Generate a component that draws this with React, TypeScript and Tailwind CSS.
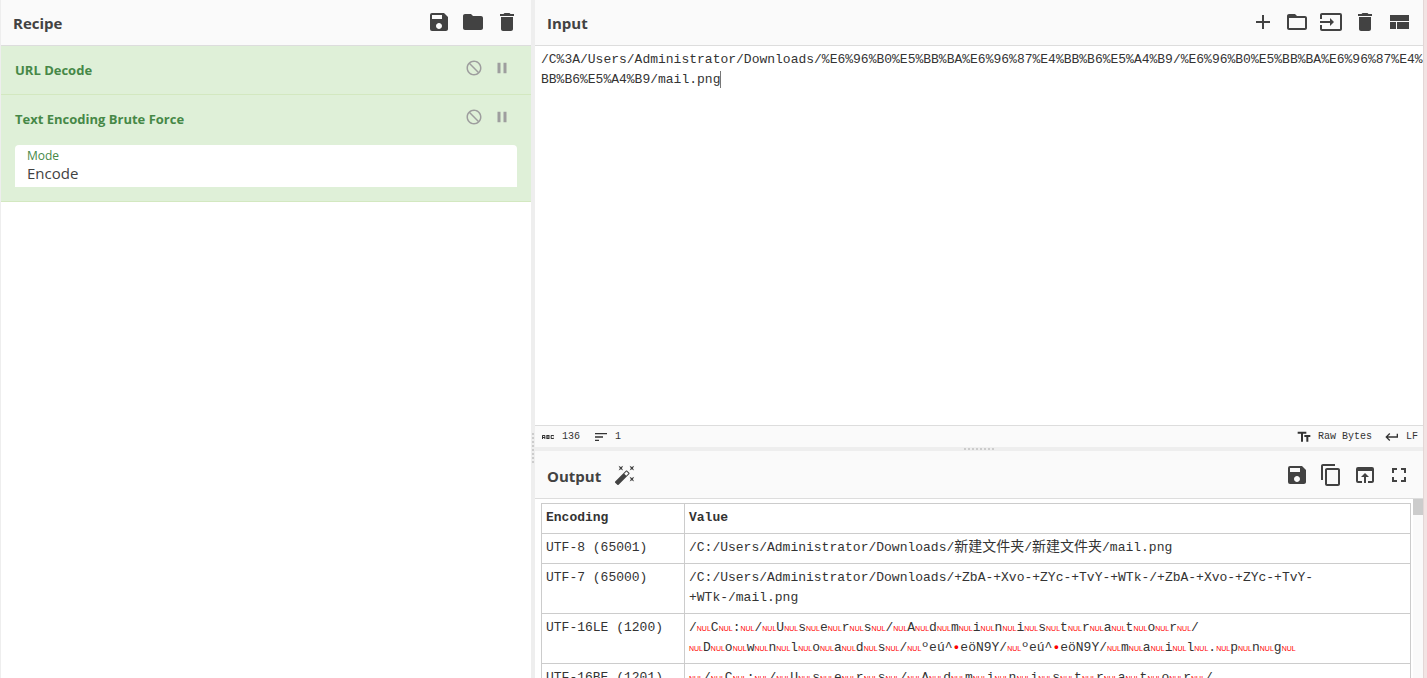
import { MdSave, MdFolder, MdDelete, MdAdd, MdInput, MdContentCopy, MdOpenInBrowser, MdFullscreen, MdNotInterested, MdPause, MdSort, MdTextFields, MdKeyboardReturn, MdAbc, MdFolderOpen } from "react-icons/md";
import type { ReactNode } from "react";

const INPUT =
  "/C%3A/Users/Administrator/Downloads/%E6%96%B0%E5%BB%BA%E6%96%87%E4%BB%B6%E5%A4%B9/%E6%96%B0%E5%BB%BA%E6%96%87%E4%BB%B6%E5%A4%B9/mail.png";

// "~" stands for a NUL byte, drawn as a small red marker.
const ROWS: [string, string[]][] = [
  ["UTF-8 (65001)", ["/C:/Users/Administrator/Downloads/新建文件夹/新建文件夹/mail.png"]],
  ["UTF-7 (65000)", ["/C:/Users/Administrator/Downloads/+ZbA-+Xvo-+ZYc-+TvY-+WTk-/+ZbA-+Xvo-+ZYc-+TvY-", "+WTk-/mail.png"]],
  ["UTF-16LE (1200)", ["/~C~:~/~U~s~e~r~s~/~A~d~m~i~n~i~s~t~r~a~t~o~r~/", "~D~o~w~n~l~o~a~d~s~/~ºeú^•eöN9Y/~ºeú^•eöN9Y/~m~a~i~l~.~p~n~g~"]],
  ["UTF-16BE (1201)", ["~/~C~:~/~U~s~e~r~s~/~A~d~m~i~n~i~s~t~r~a~t~o~r~/", "~D~o~w~n~l~o~a~d~s~/e°^úNöY9/e°^úNöY9~/~m~a~i~l~.~p~n~g"]],
];

function Line({ text }: { text: string }) {
  return (
    <div>
      {text.split(/([~•]|[\u4e00-\u9fff]+)/).map((part, i) => {
        if (part === "~") {
          return <span key={i} className="font-['Liberation_Sans',sans-serif] text-[7px] leading-none font-normal text-[#ff0000]">NUL</span>;
        }
        if (part === "•") return <span key={i} className="font-bold text-[#ff0000]">•</span>;
        if (/[\u4e00-\u9fff]/.test(part)) return <span key={i} className="text-[14px] leading-none">{part}</span>;
        return part;
      })}
    </div>
  );
}

function IconButton({ label, children }: { label: string; children: ReactNode }) {
  return (
    <button type="button" aria-label={label} className="flex size-6 items-center justify-center text-[#424242]">
      {children}
    </button>
  );
}

function Operation({ name, children }: { name: string; children?: ReactNode }) {
  return (
    <li className="border-b border-[#d3e8c0] bg-[#dff0d8] px-[14px] pb-[14px]">
      <div className="flex h-[34px] items-end justify-between">
        <h3 className="text-[13px] leading-5 font-bold text-[#468847]">{name}</h3>
        <div className="flex gap-[10px] pr-[6px] pb-[3px] text-[#9e9e9e]">
          <button type="button" aria-label={`Disable ${name}`}><MdNotInterested size={18} /></button>
          <button type="button" aria-label={`Pause at ${name}`}><MdPause size={18} /></button>
        </div>
      </div>
      {children}
    </li>
  );
}

export default function App() {
  return (
    <div className="flex h-screen overflow-hidden bg-white font-['Open_Sans',sans-serif] text-[#424242]">
      <section className="flex w-[531px] shrink-0 flex-col border-l border-[#eeeeee]">
        <header className="flex h-[46px] items-center justify-between border-b border-[#dddddd] bg-[#fafafa] px-3">
          <h2 className="pt-px text-[15px] font-bold">Recipe</h2>
          <div className="flex gap-[10px] pb-[2px]">
            <IconButton label="Save recipe"><MdSave size={24} /></IconButton>
            <IconButton label="Load recipe"><MdFolder size={24} /></IconButton>
            <IconButton label="Clear recipe"><MdDelete size={24} /></IconButton>
          </div>
        </header>
        <ul>
          <Operation name="URL Decode" />
          <Operation name="Text Encoding Brute Force">
            <div className="mt-4 flex h-[42px] flex-col rounded-t bg-white">
              <label htmlFor="mode" className="px-3 pt-[3px] text-[12px] leading-4 text-[#468847]">Mode</label>
              <select id="mode" defaultValue="Encode" className="w-full appearance-none px-3 text-[15px] leading-[18px]">
                <option>Encode</option>
                <option>Decode</option>
              </select>
            </div>
          </Operation>
        </ul>
      </section>

      <div className="flex w-1 shrink-0 items-center justify-center bg-[#eeeeee]">
        <div className="mt-[218px] h-[31px] w-[2px] bg-[repeating-linear-gradient(#cccccc_0_2px,transparent_2px_4px)]" />
      </div>

      <main className="flex min-w-0 flex-1 flex-col">
        <section className="flex h-[447px] shrink-0 flex-col">
          <header className="flex h-[46px] shrink-0 items-center justify-between border-b border-[#dddddd] bg-[#fafafa] px-3">
            <h2 className="pt-px text-[15px] font-bold">Input</h2>
            <div className="flex gap-[10px] pb-[2px]">
              <IconButton label="Add input"><MdAdd size={24} /></IconButton>
              <IconButton label="Open folder"><MdFolderOpen size={24} /></IconButton>
              <IconButton label="Open file"><MdInput size={24} /></IconButton>
              <IconButton label="Clear input"><MdDelete size={24} /></IconButton>
              <IconButton label="Reset layout">
                <svg viewBox="0 0 24 24" className="size-6" fill="currentColor">
                  <path d="M3 19h6v-7H3v7zm7 0h12v-7H10v7zM3 5v6h19V5H3z" />
                </svg>
              </IconButton>
            </div>
          </header>
          <div className="relative min-h-0 flex-1 font-['Liberation_Mono',monospace] text-[13px] leading-5">
            <textarea
              aria-label="Input"
              spellCheck={false}
              defaultValue={INPUT}
              className="block size-full resize-none overflow-hidden pt-1 pl-[6px] break-all text-[#333333] caret-transparent outline-none"
            />
            <span className="absolute top-[25px] left-[calc(6px+23ch)] h-[17px] w-px bg-[#777777]" />
          </div>
          <footer className="flex h-[22px] shrink-0 items-center justify-between border-t border-[#dddddd] bg-[#fafafa] pr-[5px] pl-[5px] font-['Liberation_Mono',monospace] text-[10px] text-[#333333]">
            <div className="flex items-center gap-[6px]">
              <MdAbc size={16} /><span className="pr-[7px]">136</span>
              <MdSort size={16} /><span>1</span>
            </div>
            <div className="flex items-center gap-[6px]">
              <MdTextFields size={16} /><span className="pr-[6px]">Raw Bytes</span>
              <MdKeyboardReturn size={16} /><span>LF</span>
            </div>
          </footer>
        </section>

        <div className="flex h-1 shrink-0 items-center justify-center bg-[#eeeeee]">
          <div className="h-[2px] w-[31px] bg-[repeating-linear-gradient(90deg,#cccccc_0_2px,transparent_2px_4px)]" />
        </div>

        <section className="flex min-h-0 flex-1 flex-col">
          <header className="flex h-12 shrink-0 items-center justify-between border-b border-[#dddddd] bg-[#fafafa] px-3">
            <div className="flex items-center gap-3">
              <h2 className="pt-[3px] text-[15px] font-bold">Output</h2>
              <IconButton label="Magic">
                <svg viewBox="0 0 24 24" className="size-[22px]" fill="currentColor">
                  <path d="M7.5 5.6 5 7l1.4-2.5L5 2l2.5 1.4L10 2 8.600 4.500 10 7 7.500 5.600m12 9.800L22 14l-1.400 2.500L22 19l-2.500-1.400L17 19l1.400-2.500L17 14l2.500 1.400M22 2l-1.400 2.500L22 7l-2.500-1.400L17 7l1.400-2.500L17 2l2.500 1.400L22 2m-8.660 10.780 2.440-2.440-2.120-2.120-2.440 2.440 2.120 2.120m1.030-5.490 2.340 2.340c.39.37.39 1.020 0 1.410L5.040 22.710c-.39.39-1.040.39-1.410 0l-2.340-2.340c-.39-.37-.39-1.020 0-1.410L12.960 7.290c.39-.39 1.040-.39 1.410 0z" />
                </svg>
              </IconButton>
            </div>
            <div className="flex gap-[10px]">
              <IconButton label="Save output"><MdSave size={24} /></IconButton>
              <IconButton label="Copy output"><MdContentCopy size={24} /></IconButton>
              <IconButton label="Replace input"><MdOpenInBrowser size={24} /></IconButton>
              <IconButton label="Maximise output"><MdFullscreen size={24} /></IconButton>
            </div>
          </header>
          <div className="flex min-h-0 flex-1">
            <div className="min-w-0 flex-1 overflow-hidden pt-1 pr-[2px] pl-[6px]">
              <table className="w-full border-collapse font-['Liberation_Mono','Noto_Sans_CJK_SC',monospace] text-[13px] leading-5 text-[#333333]">
                <thead>
                  <tr>
                    <th className="w-[143px] border border-[#cccccc] px-1 pt-1 pb-[5px] text-left">Encoding</th>
                    <th className="border border-[#cccccc] px-1 pt-1 pb-[5px] text-left">Value</th>
                  </tr>
                </thead>
                <tbody>
                  {ROWS.map(([name, lines]) => (
                    <tr key={name}>
                      <td className="border border-[#cccccc] px-1 pt-1 pb-[5px] align-top whitespace-nowrap">{name}</td>
                      <td className="border border-[#cccccc] px-1 pt-1 pb-[5px] align-top whitespace-nowrap">
                        {lines.map((l) => <Line key={l} text={l} />)}
                      </td>
                    </tr>
                  ))}
                </tbody>
              </table>
            </div>
            <div className="w-[10px] shrink-0 bg-[#fafafa]"><div className="h-4 bg-[#cccccc]" /></div>
          </div>
        </section>
      </main>
      <div className="w-1 shrink-0 border-l border-[#e4d6d6] bg-[#f2e3e3]" />
    </div>
  );
}
